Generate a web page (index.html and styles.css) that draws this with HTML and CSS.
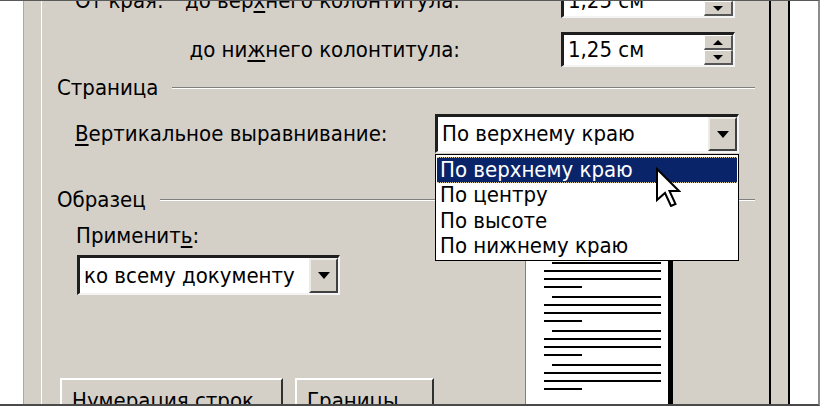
FILE: index.html
```html
<!DOCTYPE html>
<html lang="ru">
<head>
<meta charset="utf-8">
<title>Параметры страницы</title>
<link rel="stylesheet" href="styles.css">
</head>
<body>
<div class="screen">
  <div class="frame">
    <div class="outside-left"></div>
    <div class="dlg-edge"></div>
    <div class="tab">
      <div class="content">
        <div class="margin-row">
          <span class="edge-label">От края:</span>
          <span class="field-label">до вер<u>х</u>него колонтитула:</span>
          <div class="spin sunken">
            <span class="field-value">1,25 см</span>
            <div class="spin-buttons">
              <div class="spin-btn"><svg width="10" height="5" viewBox="0 0 10 5"><path d="M5 0 L10 5 H0 Z" fill="#000"/></svg></div>
              <div class="spin-btn"><svg width="10" height="5" viewBox="0 0 10 5"><path d="M0 0 H10 L5 5 Z" fill="#000"/></svg></div>
            </div>
          </div>
        </div>
        <div class="margin-row">
          <span class="edge-label"></span>
          <span class="field-label">до ни<u>ж</u>него колонтитула:</span>
          <div class="spin sunken">
            <span class="field-value">1,25 см</span>
            <div class="spin-buttons">
              <div class="spin-btn"><svg width="10" height="5" viewBox="0 0 10 5"><path d="M5 0 L10 5 H0 Z" fill="#000"/></svg></div>
              <div class="spin-btn"><svg width="10" height="5" viewBox="0 0 10 5"><path d="M0 0 H10 L5 5 Z" fill="#000"/></svg></div>
            </div>
          </div>
        </div>

        <div class="group-title group-page"><span>Страница</span><span class="groove"></span></div>

        <div class="align-row">
          <span class="align-label"><u>В</u>ертикальное выравнивание:</span>
          <div class="combo combo-align sunken">
            <span class="field-value">По верхнему краю</span>
            <div class="combo-btn"><svg width="12" height="7" viewBox="0 0 12 7"><path d="M0 0 H12 L6 7 Z" fill="#000"/></svg></div>
            <ul class="dropdown">
              <li class="item selected"><span>По верхнему краю</span></li>
              <li class="item"><span>По центру</span></li>
              <li class="item"><span>По высоте</span></li>
              <li class="item"><span>По нижнему краю</span></li>
            </ul>
            <svg class="cursor" width="26" height="40" viewBox="-2 -2 26 40"><path d="M0 0 V31 L8 24 L14 37 L18.5 35 L12.5 22 H22 Z" fill="#fff" stroke="#000" stroke-width="2" stroke-linejoin="miter"/></svg>
          </div>
        </div>

        <div class="group-title group-sample"><span>Образец</span><span class="groove"></span></div>

        <div class="sample">
          <div class="sample-left">
            <div class="apply-label">Применит<u>ь</u>:</div>
            <div class="combo combo-apply sunken">
              <span class="field-value">ко всему документу</span>
              <div class="combo-btn"><svg width="12" height="7" viewBox="0 0 12 7"><path d="M0 0 H12 L6 7 Z" fill="#000"/></svg></div>
            </div>
            <div class="buttons">
              <div class="btn btn-lines"><span><u>Н</u>умерация строк...</span></div>
              <div class="btn btn-borders"><span><u>Г</u>раницы...</span></div>
            </div>
          </div>
          <div class="preview">
            <div class="para"><div class="ln ind"></div><div class="ln"></div><div class="ln"></div><div class="ln short"></div></div>
            <div class="para"><div class="ln ind"></div><div class="ln"></div><div class="ln"></div><div class="ln short"></div></div>
            <div class="para"><div class="ln ind"></div><div class="ln"></div><div class="ln"></div><div class="ln short"></div></div>
            <div class="para"><div class="ln ind"></div><div class="ln"></div><div class="ln"></div><div class="ln short"></div></div>
            <div class="para"><div class="ln ind"></div><div class="ln"></div><div class="ln"></div><div class="ln short"></div></div>
          </div>
        </div>
      </div>
    </div>
    <div class="dlg-edge-right"></div>
    <div class="outside-right"></div>
  </div>
</div>
</body>
</html>
```

FILE: styles.css
```css
* { box-sizing: border-box; }
html, body { margin: 0; padding: 0; }
body {
  background: #fff;
  font-family: "DejaVu Sans Condensed", "DejaVu Sans", sans-serif;
  font-stretch: condensed;
  font-size: 22px;
  line-height: 26px;
  color: #000;
}
u { text-decoration-thickness: 2px; text-underline-offset: 3px; }

.screen { width: 830px; height: 416px; overflow: hidden; background: #fff; }
.frame {
  width: 820px; height: 406px; display: flex;
  border-top: 1px solid #5a5a5a;
  border-right: 2px solid #8c8c8c;
  border-bottom: 2px solid #4a4a4a;
}
.outside-left { width: 24px; background: #fff; border-right: 1px solid #a9a9a9; }
.dlg-edge { width: 17px; background: #d4d0c8; }
.tab {
  flex: 1; min-width: 0; background: #d4d0c8;
  border-left: 1px solid #fff; border-right: 2px solid #000;
  overflow: hidden;
}
.dlg-edge-right { width: 19px; background: #d4d0c8; border-right: 2px solid #000; }
.outside-right { width: 28px; background: #fff; }

.content { margin-top: -18px; }

.sunken {
  background: #fff;
  border-style: solid;
  border-width: 3px 2px 2px 3px;
  border-color: #1e1e1e #f4f4f4 #f4f4f4 #1e1e1e;
}
.field-value { padding-left: 4px; white-space: nowrap; flex: 1; min-width: 0; overflow: hidden; }

.margin-row { display: flex; align-items: center; height: 35px; padding-left: 33px; }
.margin-row + .margin-row { margin-top: 14px; }
.edge-label { width: 113px; flex: none; white-space: nowrap; }
.field-label { width: 272px; flex: none; display: flex; justify-content: flex-end; white-space: nowrap; }
.spin { margin-left: 101px; width: 174px; height: 35px; display: flex; align-items: center; flex: none; }
.spin-buttons { width: 29px; align-self: stretch; display: flex; flex-direction: column; }
.spin-btn {
  flex: 1; background: #d4d0c8; display: flex; align-items: center; justify-content: center;
  border-style: solid; border-width: 1px 2px 2px 1px;
  border-color: #fff #555 #555 #fff;
}

.group-title { display: flex; align-items: center; height: 26px; padding-left: 15px; padding-right: 14px; white-space: nowrap; }
.groove { flex: 1; height: 2px; margin-left: 14px; border-top: 1px solid #808080; border-bottom: 1px solid #fff; }
.group-page { margin-top: 8px; }
.group-sample { margin-top: 34px; }

.align-row { display: flex; align-items: center; padding-left: 33px; margin-top: 13px; }
.align-label { width: 360px; flex: none; white-space: nowrap; }

.combo { position: relative; display: flex; align-items: center; }
.combo-align { width: 304px; height: 39px; }
.combo-apply { width: 263px; height: 40px; margin-left: 17px; margin-top: 6px; }
.combo-btn {
  width: 29px; align-self: stretch; background: #d4d0c8;
  display: flex; align-items: center; justify-content: center;
  border-style: solid; border-width: 2px;
  border-color: #ecebe6 #404040 #404040 #ecebe6;
}

.dropdown {
  position: absolute; left: -3px; right: -2px; top: calc(100% + 3px);
  margin: 0; padding: 2px 0 0; list-style: none;
  background: #fff; border: 1px solid #000; height: 107px;
}
.item { height: 25.5px; display: flex; align-items: center; padding-left: 4px; white-space: nowrap; }
.item.selected {
  background: #0a246a; color: #fff;
  border-top: 1px dotted #d8c890; border-bottom: 1px dotted #d8c890;
  margin: 0 1px;
  padding-left: 3px;
}
.cursor { position: absolute; left: 217px; top: 50px; }

.sample { display: flex; padding-left: 18px; }
.sample-left { width: 465px; flex: none; display: flex; flex-direction: column; align-items: flex-start; }
.apply-label { margin-top: 10px; margin-left: 16px; white-space: nowrap; }
.buttons { display: flex; gap: 12px; margin-top: 83px; }
.btn {
  height: 40px; background: #d4d0c8; padding: 8px 0 0 10px; white-space: nowrap;
  border-style: solid; border-width: 2px;
  border-color: #fff #303030 #303030 #fff;
}
.btn-lines { width: 223px; }
.btn-borders { width: 139px; }

.preview {
  margin-top: 8px; width: 148px; height: 200px; flex: none;
  background: #fff; border-left: 1px solid #808080; border-right: 5px solid #000;
  padding: 7px 0 0 18px;
}
.para { margin-bottom: 8px; }
.ln { width: 117px; height: 2px; background: #000; margin-bottom: 6px; }
.ln.ind { width: 109px; margin-left: 8px; }
.ln.short { width: 38px; }
```
